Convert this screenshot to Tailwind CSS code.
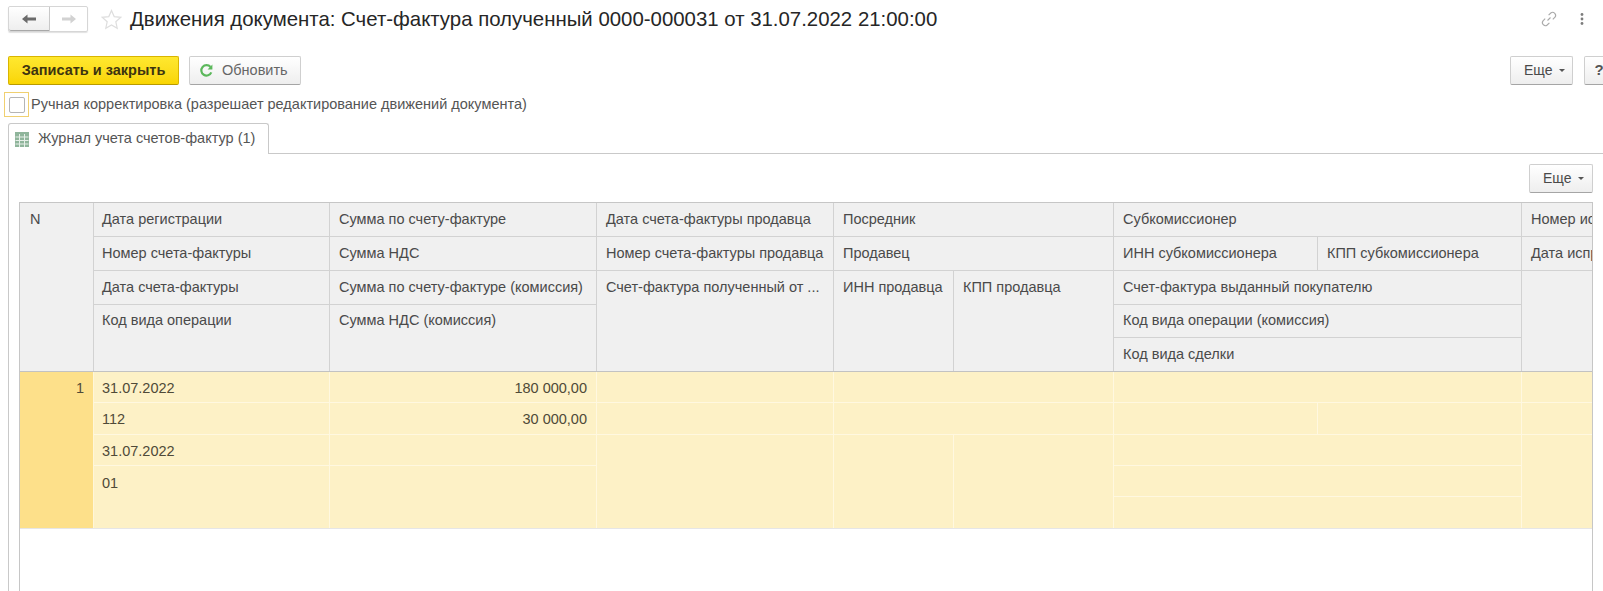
<!DOCTYPE html>
<html lang="ru">
<head>
<meta charset="utf-8">
<script src="https://cdn.jsdelivr.net/npm/@tailwindcss/browser@4"></script>
</head>
<body class="m-0 bg-white">
<div class="w-[1603px] h-[591px] overflow-hidden font-['Liberation_Sans',Arial,sans-serif] text-[14.5px] text-[#4a4a4a] flex flex-col">
  <!-- Title bar -->
  <div class="flex items-center h-[26px] mt-[6px] pl-[8px] shrink-0">
    <div class="flex h-[26px] w-[80px] rounded-[2px] border border-[#d6d6d6] shadow-[0_1px_1px_rgba(0,0,0,0.12)]">
      <div class="w-[41px] flex items-center justify-center border-r border-[#c8c8c8] bg-gradient-to-b from-white to-[#eeeeee] border-b border-b-[#a8a8a8] rounded-l-[2px]">
        <svg width="16" height="12" viewBox="0 0 16 12"><path d="M1 6 L6.5 1.5 V4.5 H15 V7.5 H6.5 V10.5 Z" fill="#6b6b6b"/></svg>
      </div>
      <div class="flex-1 flex items-center justify-center">
        <svg width="16" height="12" viewBox="0 0 16 12"><path d="M15 6 L9.5 1.5 V4.5 H1 V7.5 H9.5 V10.5 Z" fill="#d2d2d2"/></svg>
      </div>
    </div>
    <svg class="ml-[13px]" width="21" height="21" viewBox="0 0 21 21"><path d="M10.5 1.5 L13.2 7.6 L19.8 8.3 L14.8 12.7 L16.2 19.2 L10.5 15.9 L4.8 19.2 L6.2 12.7 L1.2 8.3 L7.8 7.6 Z" fill="none" stroke="#dedede" stroke-width="1.2"/></svg>
    <div class="ml-[8px] text-[20.4px] leading-[26px] text-[#262626] whitespace-nowrap">Движения документа: Счет-фактура полученный 0000-000031 от 31.07.2022 21:00:00</div>
    <div class="ml-auto flex items-center pr-[19px]">
      <svg width="18" height="18" viewBox="0 0 18 18" fill="none" stroke="#a9a9a9" stroke-width="1.1"><path d="M7.5 10.5 L10.5 7.5"/><path d="M8.6 5.2 L10.8 3 A3 3 0 0 1 15 7.2 L12.8 9.4"/><path d="M9.4 12.8 L7.2 15 A3 3 0 0 1 3 10.8 L5.2 8.6"/></svg>
      <svg class="ml-[22px]" width="4" height="14" viewBox="0 0 4 14"><circle cx="2" cy="2.5" r="1.4" fill="#7d7d7d"/><circle cx="2" cy="7" r="1.4" fill="#7d7d7d"/><circle cx="2" cy="11.5" r="1.4" fill="#7d7d7d"/></svg>
    </div>
  </div>
  <!-- Toolbar -->
  <div class="flex items-center h-[29px] mt-[24px] pl-[8px] shrink-0">
    <button class="w-[171px] h-[29px] rounded-[2px] border border-[#d9b500] border-b-[#b89a00] bg-gradient-to-b from-[#ffe82e] to-[#f9d500] text-[#3d3410] font-bold text-[14.5px]">Записать и закрыть</button>
    <button class="ml-[10px] w-[112px] h-[29px] rounded-[2px] border border-[#cfcfcf] border-b-[#a5a5a5] bg-gradient-to-b from-white to-[#eeeeee] flex items-center pl-[9px] text-[#666666]">
      <svg width="15" height="15" viewBox="0 0 15 15" fill="none"><path d="M12.3 9.4 A5.2 5.2 0 1 1 11.5 4" stroke="#5cb85c" stroke-width="2.2"/><path d="M13.4 1.5 V6.4 H8.6 Z" fill="#5cb85c"/></svg>
      <span class="ml-[8px]">Обновить</span>
    </button>
    <button class="ml-auto w-[63px] h-[29px] rounded-[2px] border border-[#cfcfcf] border-b-[#a5a5a5] bg-gradient-to-b from-white to-[#eeeeee] flex items-center pl-[13px] gap-[6px] shrink-0 text-[14px]">Еще <span class="w-0 h-0 border-x-[3px] border-x-transparent border-t-[3px] border-t-[#555555]"></span></button>
    <button class="ml-[11px] mr-[-11px] w-[30px] h-[29px] rounded-[2px] border border-[#cfcfcf] border-b-[#a5a5a5] bg-gradient-to-b from-white to-[#eeeeee] font-bold text-[#555555] text-[15px] shrink-0">?</button>
  </div>
  <!-- Checkbox -->
  <div class="flex items-center h-[25px] mt-[7px] pl-[4px] shrink-0">
    <div class="w-[25px] h-[25px] border border-[#f0d070] flex items-center justify-center">
      <div class="w-[16px] h-[16px] border border-[#b5b5b5] rounded-[2px] bg-white"></div>
    </div>
    <span class="ml-[2px] pt-[1px] text-[#555555]">Ручная корректировка (разрешает редактирование движений документа)</span>
  </div>
  <!-- Tab -->
  <div class="flex h-[31px] mt-[6px] shrink-0">
    <div class="ml-[8px] w-[261px] h-[31px] border border-b-0 border-[#c9c9c9] rounded-t-[3px] bg-white flex items-center pl-[6px] relative z-10">
      <svg width="14" height="15" viewBox="0 0 14 15"><rect x="0" y="0" width="14" height="15" fill="#8fb59b"/><path d="M0.5 5 H13.5 M0.5 8.5 H13.5 M0.5 12 H13.5 M4.5 2 V15 M9.5 2 V15" stroke="#e6efe8" stroke-width="1"/></svg>
      <span class="ml-[9px] text-[#555555]">Журнал учета счетов-фактур (1)</span>
    </div>
    <div class="flex-1 border-b border-[#c9c9c9]"></div>
  </div>
  <!-- Panel -->
  <div class="flex-1 ml-[8px] border-l border-[#c9c9c9] pl-[10px] pr-[10px] flex flex-col min-h-0">
    <div class="flex justify-end mt-[10px] shrink-0">
      <button class="w-[64px] h-[29px] rounded-[2px] border border-[#cfcfcf] border-b-[#a5a5a5] bg-gradient-to-b from-white to-[#eeeeee] flex items-center pl-[13px] gap-[6px] text-[14px]">Еще <span class="w-0 h-0 border-x-[3px] border-x-transparent border-t-[3px] border-t-[#555555]"></span></button>
    </div>
    <!-- Table -->
    <div class="mt-[9px] flex-1 min-h-0 border-l border-t border-r border-[#c6c6c6] overflow-hidden whitespace-nowrap">
      <!-- Header -->
      <div class="grid grid-cols-[74px_236px_267px_237px_120px_160px_204px_204px_100px] grid-rows-[34px_34px_34px_33px_33px] bg-[#f0f0f0] border-b border-[#c2c2c2] w-max">
        <div class="row-span-5 border-r border-[#d2d2d2] pl-[10px] pt-[6px]">N</div>
        <div class="border-r border-b border-[#d2d2d2] pl-[8px] pt-[6px]">Дата регистрации</div>
        <div class="border-r border-b border-[#d2d2d2] pl-[9px] pt-[6px]">Сумма по счету-фактуре</div>
        <div class="border-r border-b border-[#d2d2d2] pl-[9px] pt-[6px]">Дата счета-фактуры продавца</div>
        <div class="col-span-2 border-r border-b border-[#d2d2d2] pl-[9px] pt-[6px]">Посредник</div>
        <div class="col-span-2 border-r border-b border-[#d2d2d2] pl-[9px] pt-[6px]">Субкомиссионер</div>
        <div class="border-b border-[#d2d2d2] pl-[9px] pt-[6px]">Номер исправления</div>

        <div class="border-r border-b border-[#d2d2d2] pl-[8px] pt-[6px]">Номер счета-фактуры</div>
        <div class="border-r border-b border-[#d2d2d2] pl-[9px] pt-[6px]">Сумма НДС</div>
        <div class="border-r border-b border-[#d2d2d2] pl-[9px] pt-[6px]">Номер счета-фактуры продавца</div>
        <div class="col-span-2 border-r border-b border-[#d2d2d2] pl-[9px] pt-[6px]">Продавец</div>
        <div class="border-r border-b border-[#d2d2d2] pl-[9px] pt-[6px]">ИНН субкомиссионера</div>
        <div class="border-r border-b border-[#d2d2d2] pl-[9px] pt-[6px]">КПП субкомиссионера</div>
        <div class="border-b border-[#d2d2d2] pl-[9px] pt-[6px]">Дата исправления</div>

        <div class="border-r border-b border-[#d2d2d2] pl-[8px] pt-[6px]">Дата счета-фактуры</div>
        <div class="border-r border-b border-[#d2d2d2] pl-[9px] pt-[6px]">Сумма по счету-фактуре (комиссия)</div>
        <div class="row-span-3 border-r border-[#d2d2d2] pl-[9px] pt-[6px]">Счет-фактура полученный от ...</div>
        <div class="row-span-3 border-r border-[#d2d2d2] pl-[9px] pt-[6px]">ИНН продавца</div>
        <div class="row-span-3 border-r border-[#d2d2d2] pl-[9px] pt-[6px]">КПП продавца</div>
        <div class="col-span-2 border-r border-b border-[#d2d2d2] pl-[9px] pt-[6px]">Счет-фактура выданный покупателю</div>
        <div class="row-span-3"></div>

        <div class="row-span-2 border-r border-[#d2d2d2] pl-[8px] pt-[5px]">Код вида операции</div>
        <div class="row-span-2 border-r border-[#d2d2d2] pl-[9px] pt-[5px]">Сумма НДС (комиссия)</div>
        <div class="col-span-2 border-r border-b border-[#d2d2d2] pl-[9px] pt-[5px]">Код вида операции (комиссия)</div>
        <div class="col-span-2 border-r border-[#d2d2d2] pl-[9px] pt-[6px]">Код вида сделки</div>
      </div>
      <!-- Data row -->
      <div class="grid grid-cols-[74px_236px_267px_237px_120px_160px_204px_204px_100px] grid-rows-[31px_32px_31px_31px_31px] bg-[#fdf1c6] border-b border-[#e6e6e6] w-max text-[#4f4a38]">
        <div class="row-span-5 bg-[#fde08a] border-r border-[#fff6d8] text-right pr-[9px] pt-[6px]">1</div>
        <div class="border-r border-b border-[#fff8e0] pl-[8px] pt-[6px]">31.07.2022</div>
        <div class="border-r border-b border-[#fff8e0] pr-[9px] pt-[6px] text-right">180 000,00</div>
        <div class="border-r border-b border-[#fff8e0]"></div>
        <div class="col-span-2 border-r border-b border-[#fff8e0]"></div>
        <div class="col-span-2 border-r border-b border-[#fff8e0]"></div>
        <div class="border-b border-[#fff8e0]"></div>

        <div class="border-r border-b border-[#fff8e0] pl-[8px] pt-[6px]">112</div>
        <div class="border-r border-b border-[#fff8e0] pr-[9px] pt-[6px] text-right">30 000,00</div>
        <div class="border-r border-b border-[#fff8e0]"></div>
        <div class="col-span-2 border-r border-b border-[#fff8e0]"></div>
        <div class="border-r border-b border-[#fff8e0]"></div>
        <div class="border-r border-b border-[#fff8e0]"></div>
        <div class="border-b border-[#fff8e0]"></div>

        <div class="border-r border-b border-[#fff8e0] pl-[8px] pt-[6px]">31.07.2022</div>
        <div class="border-r border-b border-[#fff8e0]"></div>
        <div class="row-span-3 border-r border-[#fff8e0]"></div>
        <div class="row-span-3 border-r border-[#fff8e0]"></div>
        <div class="row-span-3 border-r border-[#fff8e0]"></div>
        <div class="col-span-2 border-r border-b border-[#fff8e0]"></div>
        <div class="row-span-3"></div>

        <div class="row-span-2 border-r border-[#fff8e0] pl-[8px] pt-[7px]">01</div>
        <div class="row-span-2 border-r border-[#fff8e0]"></div>
        <div class="col-span-2 border-r border-b border-[#fff8e0]"></div>
        <div class="col-span-2 border-r border-[#fff8e0]"></div>
      </div>
    </div>
  </div>
</div>
</body>
</html>
